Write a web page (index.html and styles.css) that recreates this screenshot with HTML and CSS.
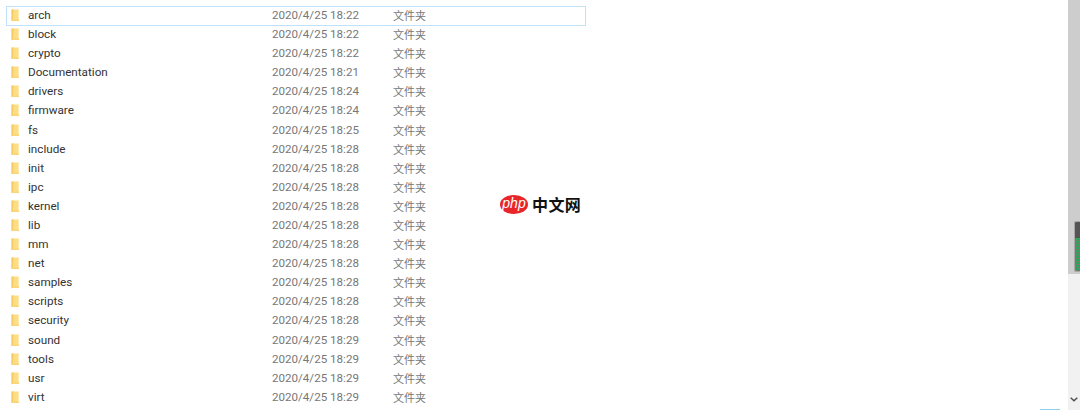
FILE: index.html
```html
<!DOCTYPE html>
<html lang="zh">
<head>
<meta charset="utf-8">
<title>Folder list</title>
<link rel="stylesheet" href="styles.css">
</head>
<body>
<svg width="0" height="0" class="defs">
  <symbol id="folder" viewBox="0 0 9 13">
    <path d="M0.5 0.5H8V12H0.5Z" fill="#fcdc85"/>
    <path d="M0.5 0.5H2.5L2 11L0.5 12.5Z" fill="#f6cb63"/>
    <path d="M0.5 12L2.5 10.5H8V12Z" fill="#fbd577"/>
    <path d="M6.8 1H8V10.5H6.8Z" fill="#fdeab0"/>
  </symbol>
</svg>
<main class="page">
  <div class="list">
    <div class="row selected"><svg class="icon"><use href="#folder"/></svg><span class="name">arch</span><span class="date">2020/4/25 18:22</span><span class="type">文件夹</span></div>
    <div class="row"><svg class="icon"><use href="#folder"/></svg><span class="name">block</span><span class="date">2020/4/25 18:22</span><span class="type">文件夹</span></div>
    <div class="row"><svg class="icon"><use href="#folder"/></svg><span class="name">crypto</span><span class="date">2020/4/25 18:22</span><span class="type">文件夹</span></div>
    <div class="row"><svg class="icon"><use href="#folder"/></svg><span class="name">Documentation</span><span class="date">2020/4/25 18:21</span><span class="type">文件夹</span></div>
    <div class="row"><svg class="icon"><use href="#folder"/></svg><span class="name">drivers</span><span class="date">2020/4/25 18:24</span><span class="type">文件夹</span></div>
    <div class="row"><svg class="icon"><use href="#folder"/></svg><span class="name">firmware</span><span class="date">2020/4/25 18:24</span><span class="type">文件夹</span></div>
    <div class="row"><svg class="icon"><use href="#folder"/></svg><span class="name">fs</span><span class="date">2020/4/25 18:25</span><span class="type">文件夹</span></div>
    <div class="row"><svg class="icon"><use href="#folder"/></svg><span class="name">include</span><span class="date">2020/4/25 18:28</span><span class="type">文件夹</span></div>
    <div class="row"><svg class="icon"><use href="#folder"/></svg><span class="name">init</span><span class="date">2020/4/25 18:28</span><span class="type">文件夹</span></div>
    <div class="row"><svg class="icon"><use href="#folder"/></svg><span class="name">ipc</span><span class="date">2020/4/25 18:28</span><span class="type">文件夹</span></div>
    <div class="row"><svg class="icon"><use href="#folder"/></svg><span class="name">kernel</span><span class="date">2020/4/25 18:28</span><span class="type">文件夹</span></div>
    <div class="row"><svg class="icon"><use href="#folder"/></svg><span class="name">lib</span><span class="date">2020/4/25 18:28</span><span class="type">文件夹</span></div>
    <div class="row"><svg class="icon"><use href="#folder"/></svg><span class="name">mm</span><span class="date">2020/4/25 18:28</span><span class="type">文件夹</span></div>
    <div class="row"><svg class="icon"><use href="#folder"/></svg><span class="name">net</span><span class="date">2020/4/25 18:28</span><span class="type">文件夹</span></div>
    <div class="row"><svg class="icon"><use href="#folder"/></svg><span class="name">samples</span><span class="date">2020/4/25 18:28</span><span class="type">文件夹</span></div>
    <div class="row"><svg class="icon"><use href="#folder"/></svg><span class="name">scripts</span><span class="date">2020/4/25 18:28</span><span class="type">文件夹</span></div>
    <div class="row"><svg class="icon"><use href="#folder"/></svg><span class="name">security</span><span class="date">2020/4/25 18:28</span><span class="type">文件夹</span></div>
    <div class="row"><svg class="icon"><use href="#folder"/></svg><span class="name">sound</span><span class="date">2020/4/25 18:29</span><span class="type">文件夹</span></div>
    <div class="row"><svg class="icon"><use href="#folder"/></svg><span class="name">tools</span><span class="date">2020/4/25 18:29</span><span class="type">文件夹</span></div>
    <div class="row"><svg class="icon"><use href="#folder"/></svg><span class="name">usr</span><span class="date">2020/4/25 18:29</span><span class="type">文件夹</span></div>
    <div class="row"><svg class="icon"><use href="#folder"/></svg><span class="name">virt</span><span class="date">2020/4/25 18:29</span><span class="type">文件夹</span></div>
  </div>
  <div class="watermark">
    <span class="php">php</span><span class="cn">中文网</span>
  </div>
  <aside class="scrollbar">
    <div class="thumb"><div class="minimap"><div class="minimap-top"></div><div class="minimap-lines"></div></div></div>
    <svg class="arrow" viewBox="0 0 8 5"><path d="M0.7 0.7L4 3.8L7.3 0.7" fill="none" stroke="#505050" stroke-width="1.5"/></svg>
  </aside>
  <div class="task"></div>
</main>
</body>
</html>
```
FILE: styles.css
```css
html, body {
  margin: 0;
  padding: 0;
  background: #fff;
  overflow: hidden;
}
.defs { position: absolute; }
.page {
  position: relative;
  width: 1080px;
  height: 410px;
  overflow: hidden;
  font-family: "Roboto", "Noto Sans CJK SC", sans-serif;
}
.list {
  width: 580px;
  padding: 6px 0 0 6px;
}
.row {
  display: flex;
  align-items: center;
  height: 19.1px;
  box-sizing: border-box;
  padding-bottom: 2px;
  border: 1px solid transparent;
  font-size: 11.7px;
  line-height: 17px;
  white-space: nowrap;
}
.row.selected {
  height: 20px;
  border-color: #bfe1f9;
}
.icon {
  width: 9px;
  height: 13px;
  margin-left: 4px;
  flex: none;
}
.name {
  width: 244px;
  margin-left: 8px;
  color: #333;
}
.date {
  width: 121px;
  color: #777;
  font-size: 11.6px;
}
.type {
  color: #777;
  font-size: 11px;
  font-family: "Noto Sans CJK SC", sans-serif;
}
.watermark {
  position: absolute;
  left: 500px;
  top: 195px;
  display: flex;
  align-items: center;
  gap: 4px;
}
.php {
  width: 28px;
  height: 19px;
  border-radius: 50%;
  background: #e8262a;
  color: #fff;
  font: italic 14px/17px "Liberation Sans", sans-serif;
  text-align: center;
}
.cn {
  color: #111;
  font: 700 16px/19px "Noto Sans CJK SC", sans-serif;
  letter-spacing: 0.4px;
}
.scrollbar {
  position: absolute;
  top: 0;
  right: 0;
  bottom: 0;
  width: 12px;
  background: #f1f1f1;
}
.thumb {
  position: relative;
  height: 274px;
  background: #cdcdcd;
}
.minimap {
  position: absolute;
  top: 221px;
  left: 6px;
  right: 0;
  height: 51px;
  box-sizing: border-box;
  border: 1px solid #a8a8a8;
  border-right: 0;
  border-radius: 2px 0 0 2px;
  display: flex;
  flex-direction: column;
  overflow: hidden;
}
.minimap-top {
  height: 16px;
  background: #555;
}
.minimap-lines {
  flex: 1;
  background: repeating-linear-gradient(180deg, #2fa55c 0 2px, #6c7f6c 2px 3px);
}
.arrow {
  position: absolute;
  left: 2px;
  bottom: 8px;
  width: 8px;
  height: 5px;
}
.task {
  position: absolute;
  left: 1040px;
  bottom: 0;
  width: 20px;
  height: 1px;
  background: #8fd0f0;
}
```
